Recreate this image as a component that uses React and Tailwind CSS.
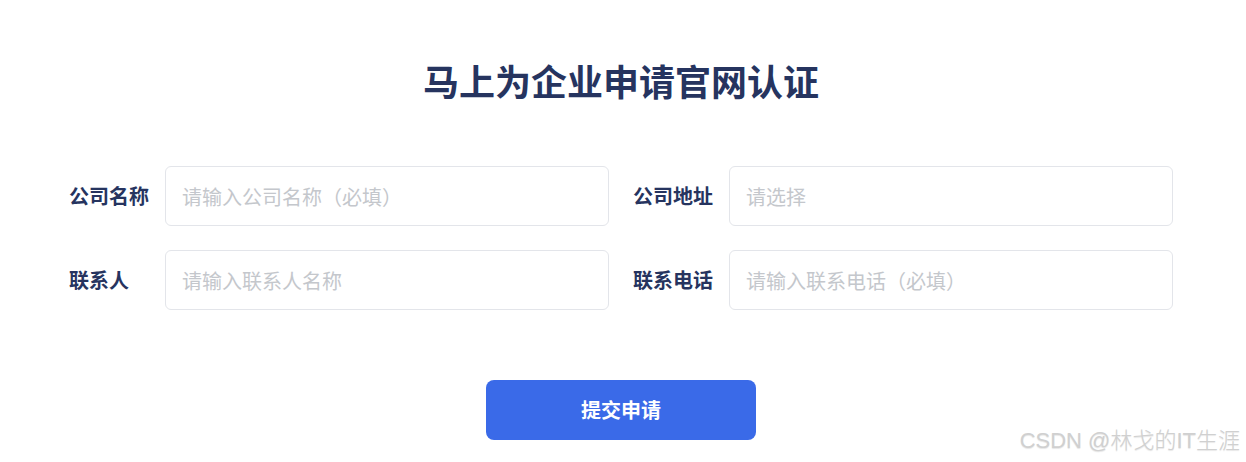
export default function App() {
  const font = { fontFamily: '"Noto Sans CJK SC", "Noto Sans", sans-serif' };
  const Field = ({ label, placeholder }) => (
    <div className="flex items-center">
      <label className="w-[96px] shrink-0 text-[20px] font-bold text-[#26345f]">{label}</label>
      <input
        className="h-[60px] w-[444px] rounded-[6px] border border-[#e3e5ea] bg-white px-[16px] text-[20px] text-[#333] outline-none placeholder:text-[#c4c7cc]"
        placeholder={placeholder}
        style={font}
      />
    </div>
  );
  return (
    <div className="relative h-[462px] w-[1246px] overflow-hidden bg-white" style={font}>
      <div className="flex flex-col items-center pr-[4px] pt-[55px]">
        <h1 className="text-[36px] font-bold leading-[50px] text-[#26345f]">马上为企业申请官网认证</h1>
        <div className="mt-[61px] grid grid-cols-[540px_540px] gap-x-[24px] gap-y-[24px]">
          <Field label="公司名称" placeholder="请输入公司名称（必填）" />
          <Field label="公司地址" placeholder="请选择" />
          <Field label="联系人" placeholder="请输入联系人名称" />
          <Field label="联系电话" placeholder="请输入联系电话（必填）" />
        </div>
        <button className="mt-[70px] h-[60px] w-[270px] rounded-[8px] bg-[#3a6ae8] text-[20px] font-bold text-white">
          提交申请
        </button>
      </div>
      <div
        className="absolute bottom-[5px] right-[6px] text-[22px] font-light text-[#d0d0d0]"
        style={{ fontFamily: '"Liberation Sans", "Noto Sans CJK SC", sans-serif', textShadow: '0 1px 1px rgba(0,0,0,0.1)' }}
      >
        CSDN @林戈的IT生涯
      </div>
    </div>
  );
}
